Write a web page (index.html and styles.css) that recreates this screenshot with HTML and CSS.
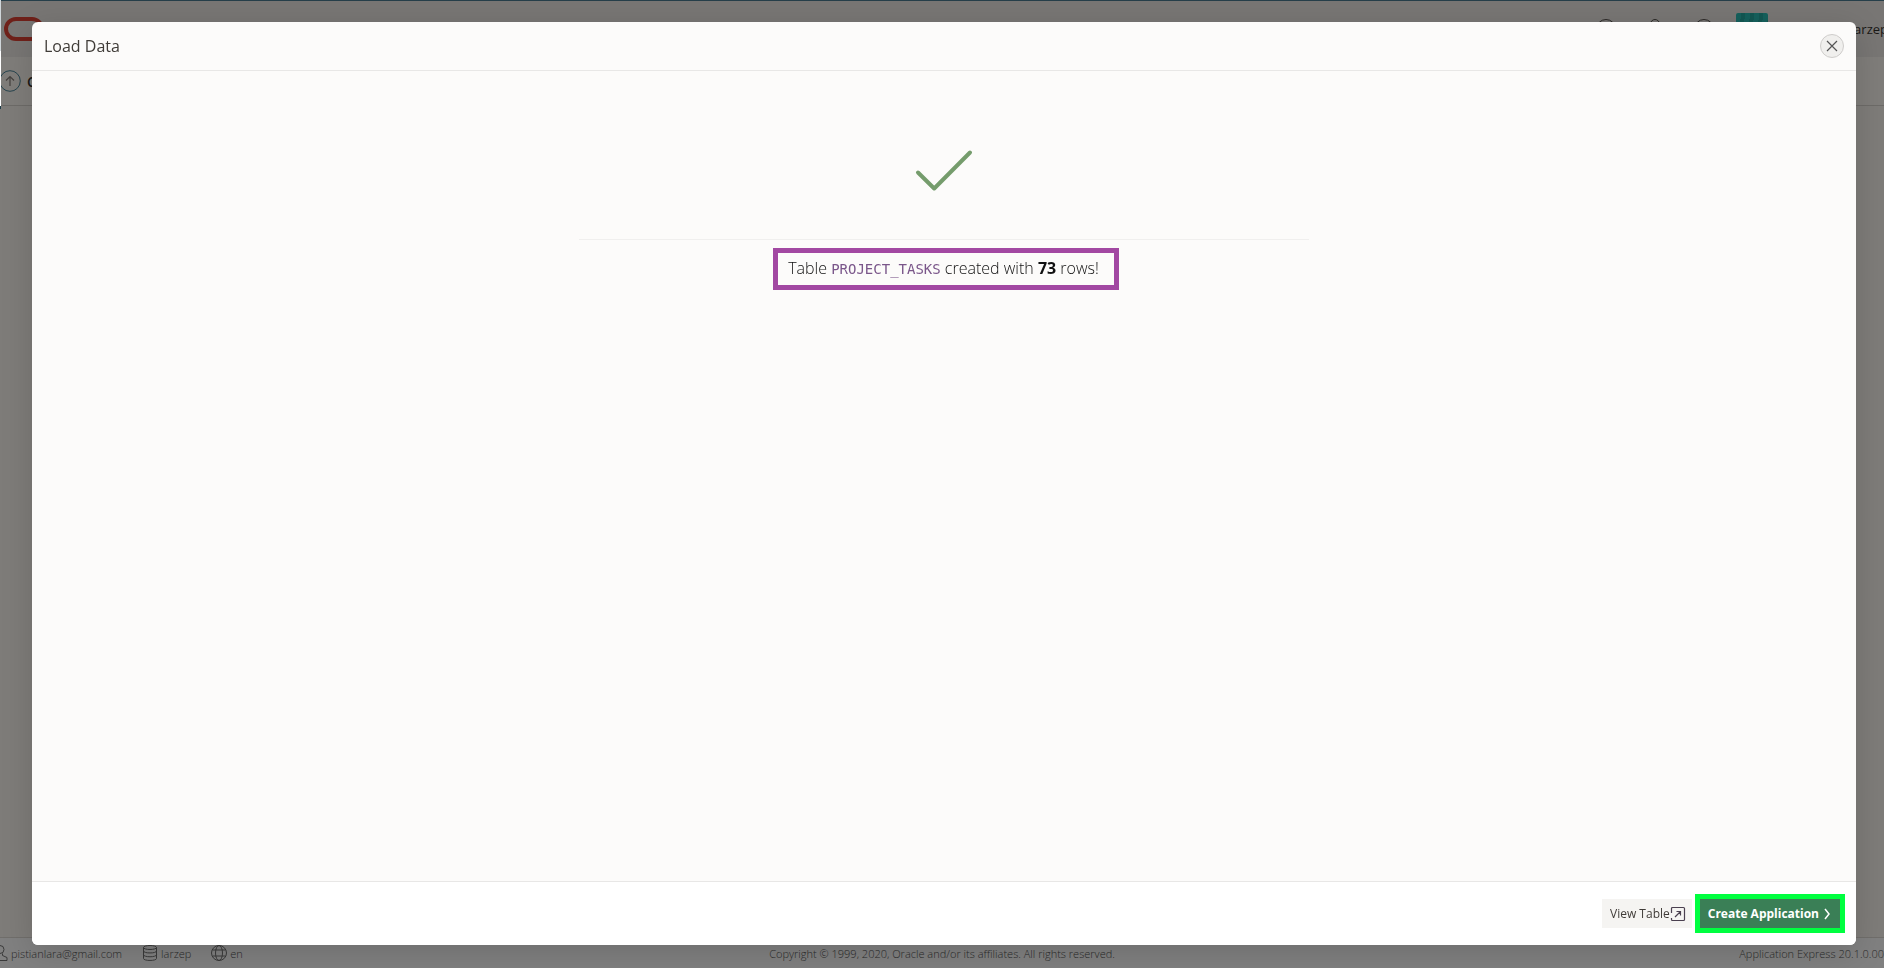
FILE: index.html
```
<!DOCTYPE html>
<html lang="en">
<head>
<meta charset="utf-8">
<title>Load Data</title>
<link rel="stylesheet" href="styles.css">
</head>
<body>
<div class="page">
  <header class="topbar">
    <svg class="logo" width="40" height="24" viewBox="0 0 40 24"><rect x="2" y="2" width="36" height="20" rx="10" fill="none" stroke="#6f211a" stroke-width="4"/></svg>
    <div class="tools">
      <svg width="20" height="20" viewBox="0 0 20 20"><circle cx="10" cy="10" r="9.500"/></svg>
      <svg width="20" height="20" viewBox="0 0 20 20"><circle cx="10" cy="5" r="4.500"/><path d="M2 19c0-10 16-10 16 0"/></svg>
      <svg width="20" height="20" viewBox="0 0 20 20"><circle cx="10" cy="10" r="9.500"/></svg>
      <span class="avatar"></span>
      <span class="account">larzep</span>
    </div>
  </header>
  <div class="crumbs">
    <svg width="22" height="22" viewBox="0 0 22 22"><circle cx="11" cy="11" r="10.300" fill="none" stroke="#28454f"/><path d="M11 16V6.500M7 10.500l4-4 4 4" fill="none" stroke="#45423f" stroke-width="1.200"/></svg>
    <span>C</span>
  </div>
  <main class="workspace"></main>
  <footer class="status">
    <div class="status-items">
      <span class="item"><svg width="16" height="16" viewBox="0 0 16 16"><circle cx="8" cy="4.500" r="4"/><path d="M5.500 8.500v2L1 12.500v3h14v-3l-4.500-2v-2"/></svg>pistianlara@gmail.com</span>
      <span class="item"><svg width="16" height="16" viewBox="0 0 16 16"><ellipse cx="8" cy="2.500" rx="6.500" ry="2"/><path d="M1.500 2.500v11c0 2.600 13 2.600 13 0v-11M1.500 6c0 2.600 13 2.600 13 0M1.500 9.800c0 2.600 13 2.600 13 0"/></svg>larzep</span>
      <span class="item"><svg width="16" height="16" viewBox="0 0 16 16"><circle cx="8" cy="8" r="7.500"/><ellipse cx="8" cy="8" rx="3.500" ry="7.500"/><path d="M1.500 5h13M1.500 11h13"/></svg>en</span>
    </div>
    <span class="copyright">Copyright © 1999, 2020, Oracle and/or its affiliates. All rights reserved.</span>
    <span class="version">Application Express 20.1.0.00</span>
  </footer>
</div>

<section class="dialog" role="dialog" aria-labelledby="dialog-title">
  <header class="dialog-head">
    <h1 id="dialog-title">Load Data</h1>
    <button class="close" type="button" aria-label="Close"><svg width="12" height="12" viewBox="0 0 12 12"><path d="M1 1l10 10M11 1L1 11" fill="none" stroke="#555" stroke-width="1.200"/></svg></button>
  </header>
  <div class="dialog-body">
    <div class="result">
      <svg class="tick" width="64" height="64" viewBox="0 0 64 64"><path d="M6 33.500L22.200 49.500L58 13.500" fill="none" stroke="#759c6c" stroke-width="4" stroke-linecap="round" stroke-linejoin="round"/></svg>
    </div>
    <p class="message">Table <code>PROJECT_TASKS</code> created with <strong>73</strong> rows!</p>
  </div>
  <footer class="dialog-foot">
    <button class="btn" type="button">View Table<svg width="16" height="16" viewBox="0 0 16 16"><path d="M1.500 7V2.500a1 1 0 0 1 1-1h11a1 1 0 0 1 1 1v11a1 1 0 0 1-1 1h-11a1 1 0 0 1-1-1V12M5 11l5.500-5.500M6.500 5.500h4v4" fill="none" stroke="#4a4050" stroke-width="1.200"/></svg></button>
    <button class="btn primary" type="button">Create Application<svg width="16" height="16" viewBox="0 0 16 16"><path d="M6 3l4 5-4 5" fill="none" stroke="#fff" stroke-width="1.500"/></svg></button>
  </footer>
</section>
</body>
</html>
```
FILE: styles.css
```
* { box-sizing: border-box; }

body {
  margin: 0;
  overflow: hidden;
  font-family: "Open Sans", "Noto Sans", sans-serif;
  color: #1a1816;
}

.page {
  display: flex;
  flex-direction: column;
  height: 100vh;
  background: #7e7c79;
}

.page::before {
  content: "";
  position: absolute;
  top: 0;
  left: 0;
  width: 1px;
  height: 109px;
  background: linear-gradient(#d0d6da 51px, #fff 51px 106px, #1d3c48 106px);
}

.page::after {
  content: "";
  position: fixed;
  inset: 22px 28px 23px 32px;
  border-radius: 6px;
  box-shadow: 0 8px 32px rgba(0, 0, 0, 0.15);
}

.topbar {
  display: flex;
  align-items: center;
  justify-content: space-between;
  height: 57px;
  padding-left: 4px;
  border-top: 1px solid #263f4a;
  background: #787674;
}

.tools {
  display: flex;
  align-items: center;
  gap: 29px;
  margin-right: -4px;
  font-size: 13px;
  font-weight: 500;
}

.tools svg {
  fill: none;
  stroke: #2a2826;
}

.avatar {
  width: 32px;
  height: 32px;
  margin-left: -7px;
  border-radius: 2px;
  background: repeating-linear-gradient(95deg, #15605c 0 5px, #125752 5px 9px);
}

.account {
  margin-left: 54px;
}

.crumbs {
  display: flex;
  align-items: center;
  gap: 6px;
  height: 49px;
  margin-left: -1px;
  border-bottom: 1px solid #6d6b68;
  background: #7f7d7a;
  font-size: 14px;
  font-weight: 600;
}

.workspace { flex: 1; }

.status {
  display: grid;
  grid-template-columns: 1fr auto 1fr;
  align-items: center;
  height: 31px;
  border-top: 1px solid #706e6b;
  background: #808080;
  color: #2a2a2a;
  font-size: 11px;
  font-weight: 300;
}

.status-items {
  display: flex;
  gap: 20px;
  margin-left: -8px;
}

.item {
  display: flex;
  align-items: center;
  gap: 3px;
}

.item svg {
  fill: none;
  stroke: #3a3a3a;
}

.version {
  justify-self: end;
}

.dialog {
  position: fixed;
  inset: 22px 28px 23px 32px;
  display: flex;
  flex-direction: column;
  overflow: hidden;
  border-radius: 6px;
  background: #fcfbfa;
}

.dialog-head {
  display: flex;
  align-items: center;
  justify-content: space-between;
  height: 49px;
  padding: 0 12px;
  border-bottom: 1px solid #e8e7e6;
}

.dialog-head h1 {
  margin: 0;
  font-size: 16px;
  font-weight: 500;
  color: #403c38;
}

.close {
  display: grid;
  place-items: center;
  width: 24px;
  height: 24px;
  padding: 0;
  border: 1px solid #cfcdcb;
  border-radius: 50%;
  background: #f0efed;
}

.dialog-body {
  flex: 1;
  display: flex;
  flex-direction: column;
  align-items: center;
}

.result {
  display: flex;
  justify-content: center;
  width: 40%;
  padding: 68px 0 36px;
  border-bottom: 1px solid #f0efee;
}

.message {
  margin: 8px 0 0 4px;
  padding: 3px 15px 5px 10px;
  border: 5px solid #a248a2;
  font-size: 16px;
  font-weight: 300;
  line-height: 24px;
  color: #111;
}

.message code {
  font-family: "DejaVu Sans Mono", monospace;
  font-size: 14px;
  line-height: 16px;
  color: #7a568a;
}

.message strong {
  font-weight: 700;
}

.dialog-foot {
  display: flex;
  align-items: center;
  justify-content: flex-end;
  gap: 8px;
  height: 64px;
  padding: 0 16px;
  border-top: 1px solid #e8e7e6;
  background: #fff;
}

.btn {
  display: flex;
  align-items: center;
  height: 29px;
  padding: 0 6px 0 8px;
  border: 0;
  background: #f5f4f2;
  color: #403c38;
  font-family: inherit;
  font-size: 12px;
}

.primary {
  padding: 0 5px 0 8px;
  outline: 5px solid #00ff40;
  background: #3a7f56;
  color: #fff;
  font-weight: 700;
}
```
